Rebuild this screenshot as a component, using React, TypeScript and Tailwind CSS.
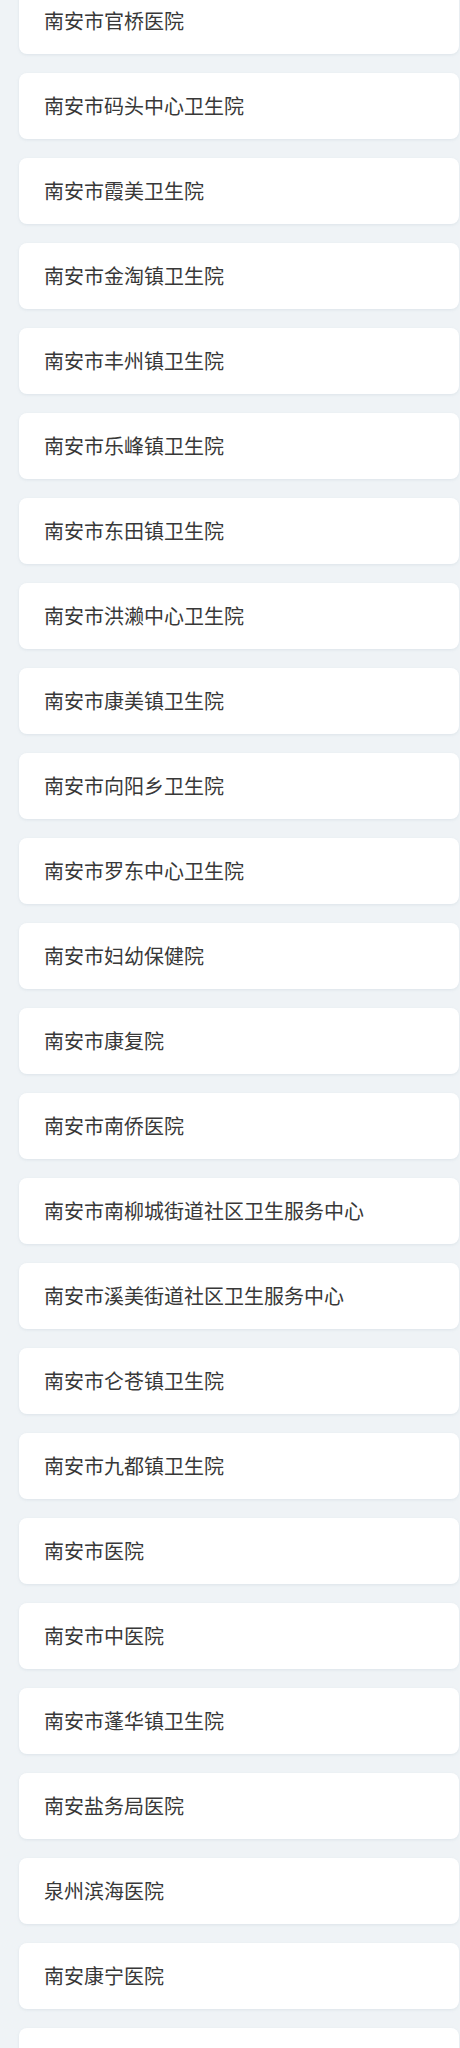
import React from "react";

const names = [
  "南安市官桥医院",
  "南安市码头中心卫生院",
  "南安市霞美卫生院",
  "南安市金淘镇卫生院",
  "南安市丰州镇卫生院",
  "南安市乐峰镇卫生院",
  "南安市东田镇卫生院",
  "南安市洪濑中心卫生院",
  "南安市康美镇卫生院",
  "南安市向阳乡卫生院",
  "南安市罗东中心卫生院",
  "南安市妇幼保健院",
  "南安市康复院",
  "南安市南侨医院",
  "南安市南柳城街道社区卫生服务中心",
  "南安市溪美街道社区卫生服务中心",
  "南安市仑苍镇卫生院",
  "南安市九都镇卫生院",
  "南安市医院",
  "南安市中医院",
  "南安市蓬华镇卫生院",
  "南安盐务局医院",
  "泉州滨海医院",
  "南安康宁医院",
  "",
];

export default function App() {
  return (
    <div
      className="min-h-screen bg-[#eff3f6] overflow-hidden"
      style={{ fontFamily: '"Noto Sans CJK SC", "Noto Sans", sans-serif' }}
    >
      <div className="flex flex-col gap-[19px] pl-[19px] pr-[1px] mt-[-12px]">
        {names.map((n, i) => (
          <div
            key={i}
            className="h-[66px] shrink-0 rounded-lg bg-white flex items-center pl-[25px] text-[20px] text-[#383838] shadow-[0_1px_3px_rgba(140,160,180,0.18)]"
          >
            {n}
          </div>
        ))}
      </div>
    </div>
  );
}
